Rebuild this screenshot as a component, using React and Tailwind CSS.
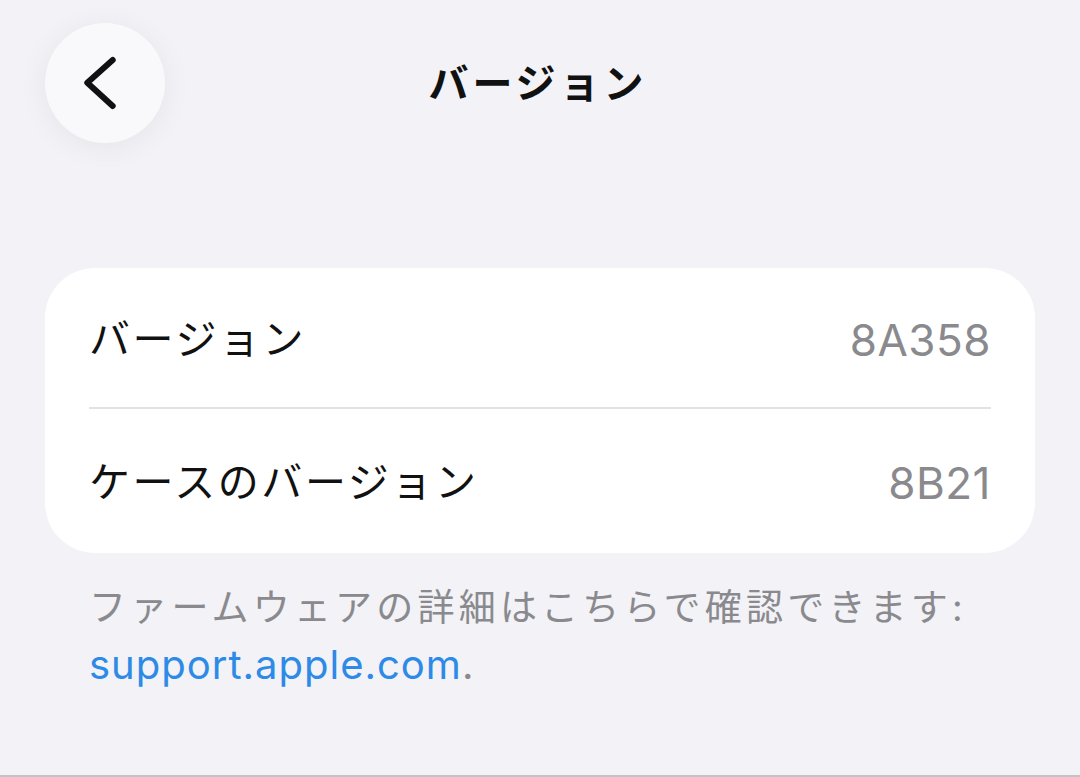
export default function App() {
  const font = { fontFamily: '"Inter", "Noto Sans CJK JP", sans-serif' };
  return (
    <div
      className="w-[1080px] h-[777px] bg-[#f2f2f7] border-b-2 border-[#c2c2c8] flex flex-col overflow-hidden"
      style={font}
    >
      <div className="grid grid-cols-[1fr_auto_1fr] items-center pt-[23px] pl-[45px] pr-[45px]">
        <div>
          <div className="w-[120px] h-[120px] rounded-full bg-[#f9f9fb] shadow-[0_4px_30px_rgba(0,0,0,0.06)] flex items-center justify-center">
            <svg width="120" height="120" viewBox="0 0 120 120">
              <path
                d="M67.7 37 L42.3 59.7 L67.7 83"
                fill="none"
                stroke="#111"
                strokeWidth="6"
                strokeLinecap="round"
                strokeLinejoin="round"
              />
            </svg>
          </div>
        </div>
        <div className="text-[40px] font-bold text-[#111] tracking-[4px] -ml-[4px] mt-[1px]">バージョン</div>
        <div />
      </div>

      <div className="mt-[125px] mx-[45px] bg-white rounded-[50px] px-[44px]">
        <div className="h-[141px] pt-[4px] flex items-center justify-between border-b-2 border-[#e2e2e6]">
          <span className="text-[41px] text-[#111] tracking-[2.6px]">バージョン</span>
          <span className="text-[44px] text-[#8a8a8e] tracking-[0.5px]">8A358</span>
        </div>
        <div className="h-[144px] pt-[4px] flex items-center justify-between">
          <span className="text-[41px] text-[#111] tracking-[2.6px]">ケースのバージョン</span>
          <span className="text-[44px] text-[#8a8a8e] tracking-[0.5px]">8B21</span>
        </div>
      </div>

      <div className="mx-[89px] mt-[26px] text-[37px] leading-[57px] text-[#8a8a8e]">
        <div className="tracking-[4.2px] whitespace-nowrap">ファームウェアの詳細はこちらで確認できます:</div>
        <div className="text-[40px] tracking-[1px]">
          <span className="text-[#2d8ae6]">support.apple.com</span>.
        </div>
      </div>
    </div>
  );
}
